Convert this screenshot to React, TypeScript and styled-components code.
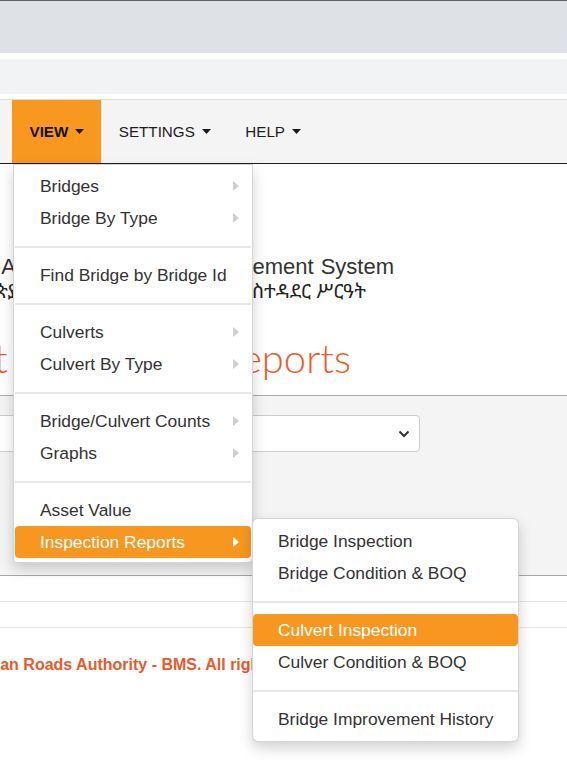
import React from "react";
import styled, { createGlobalStyle } from "styled-components";

const GlobalStyle = createGlobalStyle`
  html, body { margin: 0; padding: 0; background: #fff; overflow: hidden; }
  body { font-family: "Liberation Sans", Arial, sans-serif; width: 567px; height: 768px; }
  * { box-sizing: border-box; }
`;

const Page = styled.div`
  position: relative;
  width: 567px;
  height: 768px;
  overflow: hidden;
  background: #fff;
`;

const ChromeBar = styled.div`
  height: 53px;
  border-top: 1px solid #5f6368;
  background: #dee1e6;
`;

const AddressBar = styled.div`
  height: 35px;
  margin-top: 6px;
  background: #f1f3f4;
`;

const Navbar = styled.nav`
  margin-top: 5px;
  height: 65px;
  display: flex;
  align-items: stretch;
  padding-left: 12px;
  background: #f4f4f4;
  border-top: 1px solid #dddddd;
  border-bottom: 1px solid #1e1e1e;
`;

const NavItem = styled.div<{ $active?: boolean }>`
  display: flex;
  align-items: center;
  gap: 7px;
  padding: 0 17px 0 17.5px;
  font-size: 15.2px;
  font-weight: ${(p) => (p.$active ? 700 : 400)};
  color: ${(p) => (p.$active ? "#111" : "#1c1c1c")};
  background: ${(p) => (p.$active ? "#f8981f" : "transparent")};
`;

const Caret = () => (
  <svg width="9" height="5" viewBox="0 0 9 5">
    <path d="M0 0h9L4.5 5z" fill="#1a1a1a" />
  </svg>
);

const Header = styled.header`
  padding: 90px 0 14px;
  border-bottom: 1px solid #aaaaaa;
  white-space: nowrap;
`;

/* A line whose text ends at a given x; longer text runs off the left edge. */
const EndLine = styled.div<{ $end: number }>`
  display: flex;
  justify-content: flex-end;
  width: ${(p) => p.$end}px;
  white-space: nowrap;
  & > span { flex-shrink: 0; }
`;

const SystemTitle = styled(EndLine)`
  font-size: 22px;
  line-height: 26px;
  word-spacing: 1px;
  color: #333;
`;

const AmharicTitle = styled(EndLine)`
  font-family: "Noto Sans Ethiopic", "Noto Serif Ethiopic", "Abyssinica SIL", serif;
  font-size: 19.5px;
  line-height: 22px;
  color: #222;
`;

const ReportTitle = styled(EndLine)`
  margin-top: 34px;
  font-family: Lato, "Noto Sans", sans-serif;
  font-weight: 300;
  font-size: 40px;
  line-height: 45px;
  word-spacing: 5px;
  color: #f15a24;
`;

const FilterPanel = styled.section`
  height: 180px;
  padding-top: 19px;
  background: #f4f4f4;
  border-bottom: 1px solid #a8a8a8;
`;

const SelectBox = styled.div`
  display: flex;
  align-items: center;
  justify-content: flex-end;
  width: 440px;
  height: 37px;
  margin-left: -20px;
  padding-right: 9px;
  background: #fff;
  border: 1px solid #cccccc;
  border-radius: 4px;
`;

const TableRow = styled.div`
  height: 26px;
  border-bottom: 1px solid #e6e6e6;
`;

const Footer = styled.div`
  margin-top: 27px;
  text-indent: -54px;
  white-space: nowrap;
  font-size: 16px;
  font-weight: 700;
  line-height: 20px;
  color: #ea5a2a;
`;

const Menu = styled.div<{ $left: number; $top: number; $width: number; $round: string; $pad: string }>`
  position: absolute;
  left: ${(p) => p.$left}px;
  top: ${(p) => p.$top}px;
  width: ${(p) => p.$width}px;
  padding: ${(p) => p.$pad};
  background: #fff;
  border: 1px solid rgba(0, 0, 0, 0.17);
  border-radius: ${(p) => p.$round};
  box-shadow: 0 6px 14px rgba(0, 0, 0, 0.18);
`;

const MenuItem = styled.div<{ $active?: boolean }>`
  display: flex;
  align-items: center;
  justify-content: space-between;
  height: 32px;
  padding: 0 12px 0 25px;
  font-size: 17.4px;
  color: ${(p) => (p.$active ? "#fff" : "#333")};
  background: ${(p) => (p.$active ? "#f8971f" : "transparent")};
  border-radius: 4px;
  white-space: nowrap;
`;

const Divider = styled.div`
  height: 2px;
  margin: 12px 0 11px;
  background: #e7e7e7;
`;

const SideCaret = ({ light }: { light?: boolean }) => (
  <svg width="6" height="10" viewBox="0 0 6 10">
    <path d="M0 0l6 5-6 5z" fill={light ? "#ffffff" : "#cfcfcf"} />
  </svg>
);

type Entry = { label: string; sub?: boolean; active?: boolean } | "divider";

const viewMenu: Entry[] = [
  { label: "Bridges", sub: true },
  { label: "Bridge By Type", sub: true },
  "divider",
  { label: "Find Bridge by Bridge Id" },
  "divider",
  { label: "Culverts", sub: true },
  { label: "Culvert By Type", sub: true },
  "divider",
  { label: "Bridge/Culvert Counts", sub: true },
  { label: "Graphs", sub: true },
  "divider",
  { label: "Asset Value" },
  { label: "Inspection Reports", sub: true, active: true },
];

const reportMenu: Entry[] = [
  { label: "Bridge Inspection" },
  { label: "Bridge Condition & BOQ" },
  "divider",
  { label: "Culvert Inspection", active: true },
  { label: "Culver Condition & BOQ" },
  "divider",
  { label: "Bridge Improvement History" },
];

const renderEntries = (entries: Entry[]) =>
  entries.map((e, i) =>
    e === "divider" ? (
      <Divider key={i} />
    ) : (
      <MenuItem key={i} $active={e.active}>
        <span>{e.label}</span>
        {e.sub && <SideCaret light={e.active} />}
      </MenuItem>
    )
  );

export default function App() {
  return (
    <Page>
      <GlobalStyle />
      <ChromeBar />
      <AddressBar />
      <Navbar>
        <NavItem $active>
          VIEW <Caret />
        </NavItem>
        <NavItem>
          SETTINGS <Caret />
        </NavItem>
        <NavItem>
          HELP <Caret />
        </NavItem>
      </Navbar>
      <Header>
        <SystemTitle $end={394}>
          <span>Ethiopian Roads Authority – Bridge Management System</span>
        </SystemTitle>
        <AmharicTitle $end={366}>
          <span>የኢትዮጵያ መንገዶች ባለሥልጣን የድልድይ አስተዳደር ሥርዓት</span>
        </AmharicTitle>
        <ReportTitle $end={351}>
          <span>Culvert Inspection Reports</span>
        </ReportTitle>
      </Header>
      <FilterPanel>
        <SelectBox>
          <svg width="12" height="8" viewBox="0 0 12 8">
            <path d="M1.5 1.5L6 6l4.5-4.5" fill="none" stroke="#333" strokeWidth="2" />
          </svg>
        </SelectBox>
      </FilterPanel>
      <TableRow />
      <TableRow />
      <Footer>Ethiopian Roads Authority - BMS. All rights reserved.</Footer>

      <Menu $left={13} $top={164} $width={240} $round="0 0 4px 4px" $pad="5px 1px 4px">
        {renderEntries(viewMenu)}
      </Menu>
      <Menu $left={252} $top={518} $width={267} $round="6px" $pad="6px 0">
        {renderEntries(reportMenu)}
      </Menu>
    </Page>
  );
}
